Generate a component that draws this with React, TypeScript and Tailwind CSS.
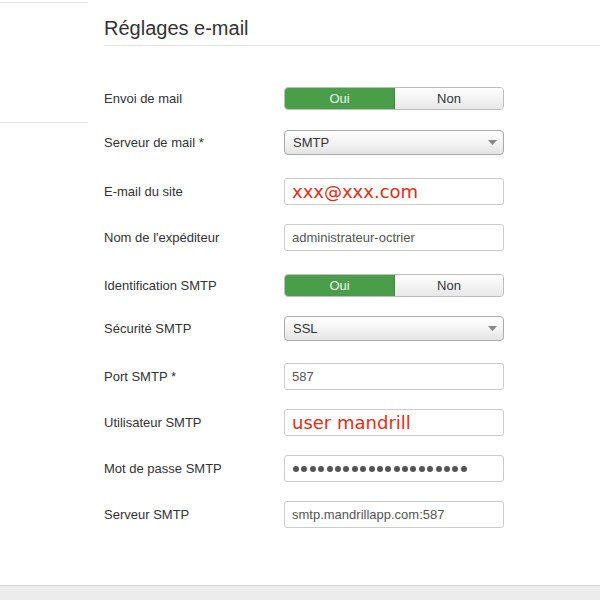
type Field = {
  label: string;
  kind: 'toggle' | 'select' | 'input' | 'red' | 'password';
  value?: string;
  mt: string;
  h: string;
};

const fields: Field[] = [
  { label: 'Envoi de mail', kind: 'toggle', mt: 'mt-[41px]', h: 'h-[23px]' },
  { label: 'Serveur de mail *', kind: 'select', value: 'SMTP', mt: 'mt-[20px]', h: 'h-[25px]' },
  { label: 'E-mail du site', kind: 'red', value: 'xxx@xxx.com', mt: 'mt-[23px]', h: 'h-[27px]' },
  { label: "Nom de l'expéditeur", kind: 'input', value: 'administrateur-octrier', mt: 'mt-[19px]', h: 'h-[27px]' },
  { label: 'Identification SMTP', kind: 'toggle', mt: 'mt-[23px]', h: 'h-[23px]' },
  { label: 'Sécurité SMTP', kind: 'select', value: 'SSL', mt: 'mt-[19px]', h: 'h-[25px]' },
  { label: 'Port SMTP *', kind: 'input', value: '587', mt: 'mt-[22px]', h: 'h-[27px]' },
  { label: 'Utilisateur SMTP', kind: 'red', value: 'user mandrill', mt: 'mt-[19px]', h: 'h-[27px]' },
  { label: 'Mot de passe SMTP', kind: 'password', mt: 'mt-[19px]', h: 'h-[27px]' },
  { label: 'Serveur SMTP', kind: 'input', value: 'smtp.mandrillapp.com:587', mt: 'mt-[19px]', h: 'h-[27px]' },
];

const Toggle = () => (
  <div className="flex w-full h-full rounded-[4px] overflow-hidden border border-[#bdbdbd]">
    <div className="w-[110px] flex items-center justify-center bg-[#4a9e4a] text-[#eef8ee] border-r border-[#3d8a3d]">
      Oui
    </div>
    <div className="flex-1 flex items-center justify-center bg-gradient-to-b from-[#ffffff] to-[#e8e8e8] text-[#333]">
      Non
    </div>
  </div>
);

const Select = ({ value }: { value?: string }) => (
  <div className="flex w-full h-full items-center justify-between rounded-[4px] border border-[#aaa] bg-gradient-to-b from-[#ffffff] via-[#f4f4f4] to-[#e4e4e4] pl-[8px] pr-[6px] text-[#333]">
    <span>{value}</span>
    <svg width="9" height="5" viewBox="0 0 9 5">
      <path d="M0 0h9L4.5 5z" fill="#888" />
    </svg>
  </div>
);

const Input = ({ field }: { field: Field }) => (
  <div className="flex w-full h-full items-center rounded-[3px] border border-[#ccc] bg-white pl-[7px] text-[#555]">
    {field.kind === 'red' && (
      <span className="text-[18px] text-[#ee2a0f] font-['DejaVu_Sans',sans-serif] leading-none">
        {field.value}
      </span>
    )}
    {field.kind === 'input' && <span>{field.value}</span>}
    {field.kind === 'password' && (
      <div className="flex gap-[2.4px] pl-[1px]">
        {Array.from({ length: 21 }).map((_, i) => (
          <span key={i} className="w-[6px] h-[6px] rounded-full bg-[#555]" />
        ))}
      </div>
    )}
  </div>
);

export default function App() {
  return (
    <div className="w-[600px] h-[600px] flex flex-col bg-white font-['Liberation_Sans',Arial,sans-serif] text-[13px] text-[#333]">
      <div className="flex flex-1">
        <div className="w-[88px] shrink-0">
          <div className="h-[3px] border-b border-[#e3e3e3]" />
          <div className="h-[120px] border-b border-[#e3e3e3]" />
        </div>
        <div className="flex-1 pl-[16px]">
          <div className="h-[46px] pt-[16px] border-b border-[#e0e0e0] text-[20px] leading-[24px] text-[#333]">
            Réglages e-mail
          </div>
          {fields.map((f) => (
            <div key={f.label} className={`flex items-center ${f.mt} ${f.h}`}>
              <div className="w-[180px] shrink-0">{f.label}</div>
              <div className="w-[220px] h-full">
                {f.kind === 'toggle' && <Toggle />}
                {f.kind === 'select' && <Select value={f.value} />}
                {(f.kind === 'input' || f.kind === 'red' || f.kind === 'password') && <Input field={f} />}
              </div>
            </div>
          ))}
        </div>
      </div>
      <div className="h-[15px] border-t border-[#d6d6d6] bg-[#ececec]" />
    </div>
  );
}
